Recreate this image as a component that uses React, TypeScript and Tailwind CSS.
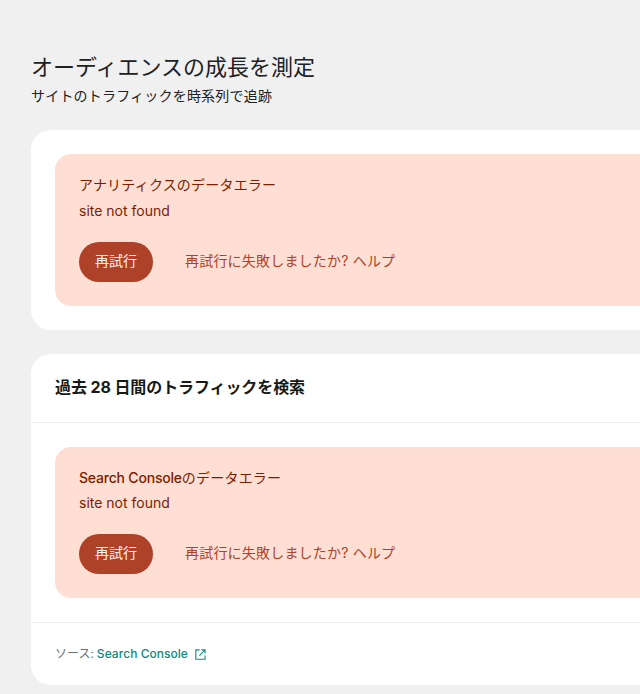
const FONT = "font-['Inter','Noto_Sans_CJK_JP',sans-serif]";

function ErrorBox({ title, titleLatin, gap }: { title: string; titleLatin?: string; gap: string }) {
  return (
    <div className="rounded-2xl bg-[#ffded3] pl-6 pt-[21px] pb-6">
      <div className="text-sm leading-5 tracking-[0.2px] text-[#7a1d00]">
        {titleLatin && <span className="font-medium tracking-[-0.2px]">{titleLatin}</span>}
        {title}
      </div>
      <div className={`${gap} text-sm leading-5 text-[#7a1d00]`}>site not found</div>
      <div className="mt-[21px] flex items-center">
        <button className="h-10 w-[74px] rounded-full bg-[#ae4228] pb-[2px] text-sm text-[#fff3ee]">再試行</button>
        <div className="mb-[2px] ml-8 text-sm leading-5 tracking-[0.2px] text-[#ae4228]">再試行に失敗しましたか? ヘルプ</div>
      </div>
    </div>
  );
}

export default function App() {
  return (
    <div className={`h-[694px] w-[640px] overflow-hidden bg-[#f0f0f0] ${FONT}`}>
      <div className="w-[760px] pl-[31px] pt-[52px]">
        <h1 className="text-[22px] leading-[30px] font-normal text-[#202124]">オーディエンスの成長を測定</h1>
        <p className="mt-1 text-sm leading-5 tracking-[0.2px] text-[#202124]">サイトのトラフィックを時系列で追跡</p>

        <section className="mt-6 rounded-[20px] bg-white p-6">
          <ErrorBox title="アナリティクスのデータエラー" gap="mt-[6px]" />
        </section>

        <section className="mt-6 rounded-[20px] bg-white">
          <div className="flex h-[69px] items-center border-b border-[#ebeef0] pb-[2px] pl-6 text-base font-bold tracking-[-0.1px] text-[#161b18]">
            過去 28 日間のトラフィックを検索
          </div>
          <div className="border-b border-[#ebeef0] p-6">
            <ErrorBox title="のデータエラー" titleLatin="Search Console" gap="mt-[5px]" />
          </div>
          <div className="flex h-[62px] items-center pl-6 text-xs">
            <span className="text-[#6c726e]">ソース:</span>
            <span className="ml-[3px] font-medium tracking-[0.04px] text-[#0e8a80]">Search Console</span>
            <svg className="ml-[7px] h-[11px] w-[11px] text-[#0e8a80]" viewBox="0 0 12 12" fill="none" stroke="currentColor" strokeWidth="1.2">
              <path d="M5 1H.9v10.1H11V7" />
              <path d="M7 1h4v4M11 1 4.8 7.2" />
            </svg>
          </div>
        </section>
      </div>
    </div>
  );
}
